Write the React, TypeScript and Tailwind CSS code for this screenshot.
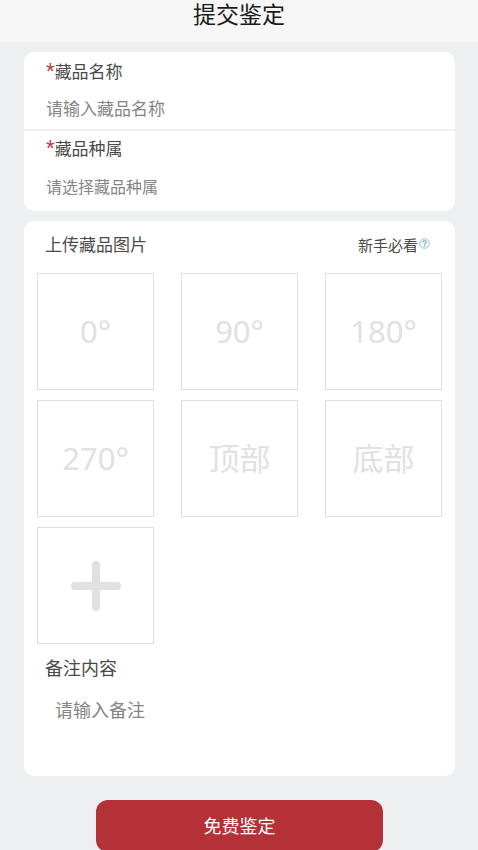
import { useState } from "react";

const shots = ["0°", "90°", "180°", "270°", "顶部", "底部"];

const tileClass =
  "flex aspect-square w-full items-center justify-center border border-[#dfdfdf] bg-white text-[31px] leading-none text-[#e1e1e1]";

function Required() {
  return <span className="font-[Roboto,sans-serif] text-[20px] leading-none text-[#b5484c]">*</span>;
}

function HelpIcon() {
  return (
    <svg className="mb-1 h-[11px] w-[11px]" viewBox="0 0 22 22" fill="none" aria-hidden="true">
      <circle cx="11" cy="11" r="9.5" stroke="#94bdd4" strokeWidth="2" />
      <path
        d="M7.6 8.8c0-2.1 1.4-3.4 3.4-3.4s3.4 1.2 3.4 3c0 2.4-3.2 2.6-3.2 5.2M11.2 15.2v2.2"
        stroke="#5f9ec4"
        strokeWidth="2.2"
      />
    </svg>
  );
}

function PlusIcon() {
  return (
    <svg className="h-[50px] w-[50px]" viewBox="0 0 50 50" aria-hidden="true">
      <path d="M25 4v42M4 25h42" stroke="#e1e1e1" strokeWidth="8" strokeLinecap="round" />
    </svg>
  );
}

export default function App() {
  const [name, setName] = useState("");
  const [kind, setKind] = useState("");
  const [note, setNote] = useState("");

  return (
    <div className="min-h-screen bg-[#eeeff1] font-['Noto_Sans','Noto_Sans_CJK_SC',sans-serif] text-[#4a4a4a]">
      <header className="flex h-[42px] justify-center bg-[#f6f6f6]">
        <h1 className="text-[23px] leading-7 text-[#1a1a1a]">提交鉴定</h1>
      </header>

      <form className="pt-[10px] pr-[23px] pl-6" onSubmit={(e) => e.preventDefault()}>
        <section className="rounded-[10px] bg-white">
          <div className="border-b-2 border-[#f1f1f2] px-[22px] pt-2 pb-2">
            <label htmlFor="name" className="block h-6 text-[17px] leading-6">
              <Required />
              藏品名称
            </label>
            <input
              id="name"
              className="mt-3 block h-[25px] w-full text-[17px] outline-none placeholder:text-[#858585]"
              placeholder="请输入藏品名称"
              value={name}
              onChange={(e) => setName(e.target.value)}
            />
          </div>
          <div className="px-[22px] pt-[6px] pb-3">
            <label htmlFor="kind" className="block h-6 text-[17px] leading-6">
              <Required />
              藏品种属
            </label>
            <select
              id="kind"
              className="mt-[14px] block h-6 w-full appearance-none text-base text-[#858585] outline-none"
              value={kind}
              onChange={(e) => setKind(e.target.value)}
            >
              <option value="">请选择藏品种属</option>
            </select>
          </div>
        </section>

        <section className="mt-[10px] rounded-[10px] bg-white px-[13px] pt-3 pb-3">
          <div className="flex items-center justify-between pr-3 pl-2">
            <h2 className="text-[17px] leading-6">上传藏品图片</h2>
            <a href="#guide" className="flex items-center gap-px text-[15px] leading-6">
              新手必看
              <HelpIcon />
            </a>
          </div>

          <div className="mt-4 grid grid-cols-3 gap-x-[27px] gap-y-[10px]">
            {shots.map((shot) => (
              <button key={shot} type="button" className={tileClass}>
                {shot}
              </button>
            ))}
            <button type="button" className={tileClass} aria-label="添加图片">
              <PlusIcon />
            </button>
          </div>

          <label htmlFor="note" className="mt-[10px] block pl-2 text-[18px] leading-7">
            备注内容
          </label>
          <textarea
            id="note"
            className="mt-[14px] block h-[68px] w-full resize-none px-[18px] text-[18px] leading-7 outline-none placeholder:text-[#858585]"
            placeholder="请输入备注"
            value={note}
            onChange={(e) => setNote(e.target.value)}
          />
        </section>

        <button
          type="submit"
          className="mx-auto mt-6 block h-[52px] w-2/3 rounded-xl bg-[#b43138] text-[18px] text-white"
        >
          免费鉴定
        </button>
      </form>
    </div>
  );
}
